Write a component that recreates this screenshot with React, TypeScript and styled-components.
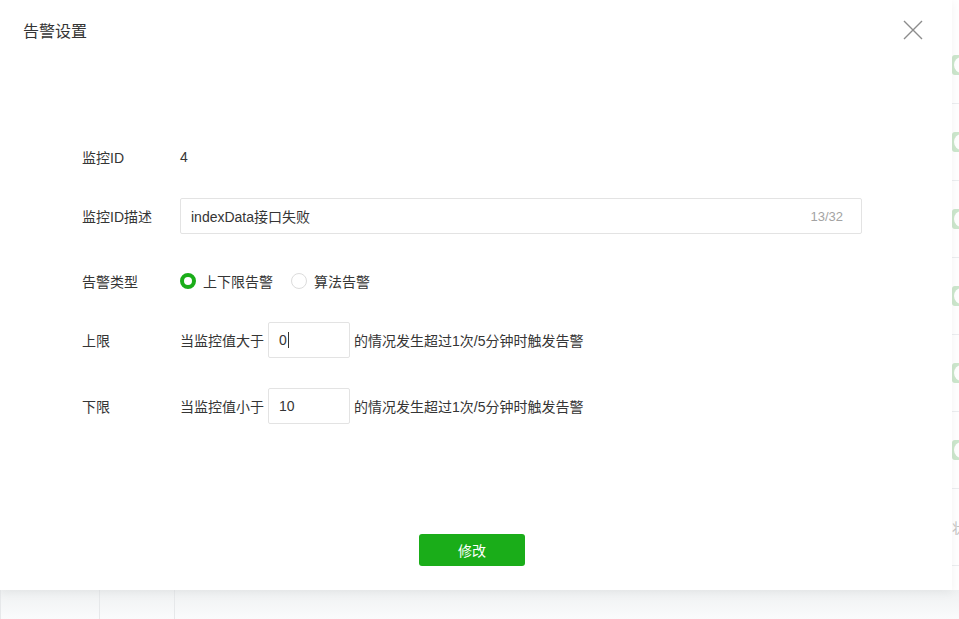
import styled, { createGlobalStyle } from 'styled-components';

const GlobalStyle = createGlobalStyle`
	html, body {
		margin: 0;
		padding: 0;
		background: #f6f7f8;
		font-family: 'Liberation Sans', 'Noto Sans CJK SC', sans-serif;
		color: #353535;
	}
	* {
		box-sizing: border-box;
	}
`;

const Page = styled.div`
	position: relative;
	width: 959px;
	height: 619px;
	overflow: hidden;
	background: #f6f7f8;
`;

const Table = styled.div`
	display: flex;
	flex-direction: column;
	padding-top: 27px;
	background: #ffffff;
	height: 590px;
`;

const TableRow = styled.div`
	display: grid;
	grid-template-columns: 99px 75px 1fr 8px;
	height: 77px;
	border-bottom: 1px solid #eceef0;
	align-items: center;
`;

const Cell = styled.div<{ $edge?: boolean }>`
	height: 100%;
	display: flex;
	align-items: center;
	font-size: 14px;
	color: #c4c4c4;
	white-space: nowrap;
	overflow: visible;
	border-left: ${(p) => (p.$edge ? 'none' : '1px solid #f0f1f2')};
	padding-left: ${(p) => (p.$edge ? '1px' : '0')};
`;

const Switch = styled.span`
	display: inline-block;
	flex-shrink: 0;
	width: 36px;
	height: 20px;
	border-radius: 3px;
	background: #cde7cd;
	position: relative;
	&::after {
		content: '';
		position: absolute;
		left: 2px;
		top: 2px;
		width: 16px;
		height: 16px;
		border-radius: 50%;
		background: #ffffff;
	}
`;

const Footer = styled.div`
	display: grid;
	grid-template-columns: 99px 75px 1fr;
	height: 29px;
	background: linear-gradient(#eff1f2, #fafbfc);
`;

const FooterCell = styled.div`
	border-left: 1px solid #e6e8ea;
`;

const Modal = styled.div`
	position: absolute;
	top: 0;
	left: 0;
	width: 952px;
	height: 590px;
	background: #ffffff;
	box-shadow: 0 2px 10px rgba(0, 0, 0, 0.06);
	display: flex;
	flex-direction: column;
`;

const Header = styled.div`
	height: 62px;
	display: flex;
	align-items: center;
	justify-content: space-between;
	padding: 0 28px 2px 23px;
`;

const Title = styled.h2`
	margin: 0;
	font-size: 16px;
	font-weight: normal;
	color: #353535;
`;

const Close = styled.button`
	border: none;
	background: none;
	padding: 0;
	width: 22px;
	height: 22px;
	cursor: pointer;
	display: flex;
	align-items: center;
	justify-content: center;
`;

const Form = styled.div`
	display: flex;
	flex-direction: column;
	padding: 77px 0 0 82px;
`;

const Row = styled.div<{ $gap: number }>`
	display: flex;
	align-items: center;
	height: 36px;
	margin-top: ${(p) => p.$gap}px;
	font-size: 14px;
`;

const Label = styled.div`
	width: 98px;
	flex-shrink: 0;
	color: #353535;
`;

const Value = styled.div`
	color: #353535;
`;

const TextBox = styled.div`
	width: 682px;
	height: 36px;
	border: 1px solid #e3e3e3;
	border-radius: 2px;
	display: flex;
	align-items: center;
	justify-content: space-between;
	padding: 0 18px 0 10px;
	color: #353535;
`;

const Counter = styled.span`
	color: #a3a3a3;
	font-size: 13px;
`;

const RadioGroup = styled.div`
	display: flex;
	align-items: center;
	gap: 18px;
`;

const RadioItem = styled.label`
	display: flex;
	align-items: center;
	gap: 7px;
	color: #353535;
`;

const RadioDot = styled.span<{ $checked?: boolean }>`
	width: 16px;
	height: 16px;
	border-radius: 50%;
	border: ${(p) => (p.$checked ? '4px solid #1aad19' : '1px solid #dcdcdc')};
	background: #ffffff;
	display: inline-block;
`;

const Sentence = styled.div`
	display: flex;
	align-items: center;
	gap: 4px;
	color: #353535;
`;

const SmallInput = styled.div`
	width: 82px;
	height: 36px;
	border: 1px solid #e3e3e3;
	border-radius: 2px;
	display: flex;
	align-items: center;
	padding-left: 10px;
	color: #353535;
`;

const Caret = styled.span`
	display: inline-block;
	width: 1px;
	height: 16px;
	background: #353535;
	margin-left: 1px;
`;

const Actions = styled.div`
	margin-top: auto;
	display: flex;
	justify-content: center;
	padding: 0 8px 24px 0;
`;

const Button = styled.button`
	width: 106px;
	height: 32px;
	border: none;
	border-radius: 3px;
	background: #1aad19;
	color: #ffffff;
	font-size: 14px;
	font-family: inherit;
	cursor: pointer;
`;

const rows = [0, 1, 2, 3, 4, 5];

export default function App() {
	return (
		<Page>
			<GlobalStyle />
			<Table>
				{rows.map((r) => (
					<TableRow key={r}>
						<Cell />
						<Cell />
						<Cell />
						<Cell $edge>
							<Switch />
						</Cell>
					</TableRow>
				))}
				<TableRow>
					<Cell />
					<Cell />
					<Cell />
					<Cell $edge>状态</Cell>
				</TableRow>
			</Table>
			<Footer>
				<FooterCell />
				<FooterCell />
				<FooterCell />
			</Footer>

			<Modal>
				<Header>
					<Title>告警设置</Title>
					<Close aria-label='close'>
						<svg width='20' height='20' viewBox='0 0 20 20'>
							<path
								d='M1 1 L19 19 M19 1 L1 19'
								stroke='#8c8c8c'
								strokeWidth='1.4'
								fill='none'
							/>
						</svg>
					</Close>
				</Header>

				<Form>
					<Row $gap={0}>
						<Label>监控ID</Label>
						<Value>4</Value>
					</Row>
					<Row $gap={23}>
						<Label>监控ID描述</Label>
						<TextBox>
							<span>indexData接口失败</span>
							<Counter>13/32</Counter>
						</TextBox>
					</Row>
					<Row $gap={29}>
						<Label>告警类型</Label>
						<RadioGroup>
							<RadioItem>
								<RadioDot $checked />
								上下限告警
							</RadioItem>
							<RadioItem>
								<RadioDot />
								算法告警
							</RadioItem>
						</RadioGroup>
					</Row>
					<Row $gap={23}>
						<Label>上限</Label>
						<Sentence>
							当监控值大于
							<SmallInput>
								0<Caret />
							</SmallInput>
							的情况发生超过1次/5分钟时触发告警
						</Sentence>
					</Row>
					<Row $gap={30}>
						<Label>下限</Label>
						<Sentence>
							当监控值小于
							<SmallInput>10</SmallInput>
							的情况发生超过1次/5分钟时触发告警
						</Sentence>
					</Row>
				</Form>

				<Actions>
					<Button>修改</Button>
				</Actions>
			</Modal>
		</Page>
	);
}
